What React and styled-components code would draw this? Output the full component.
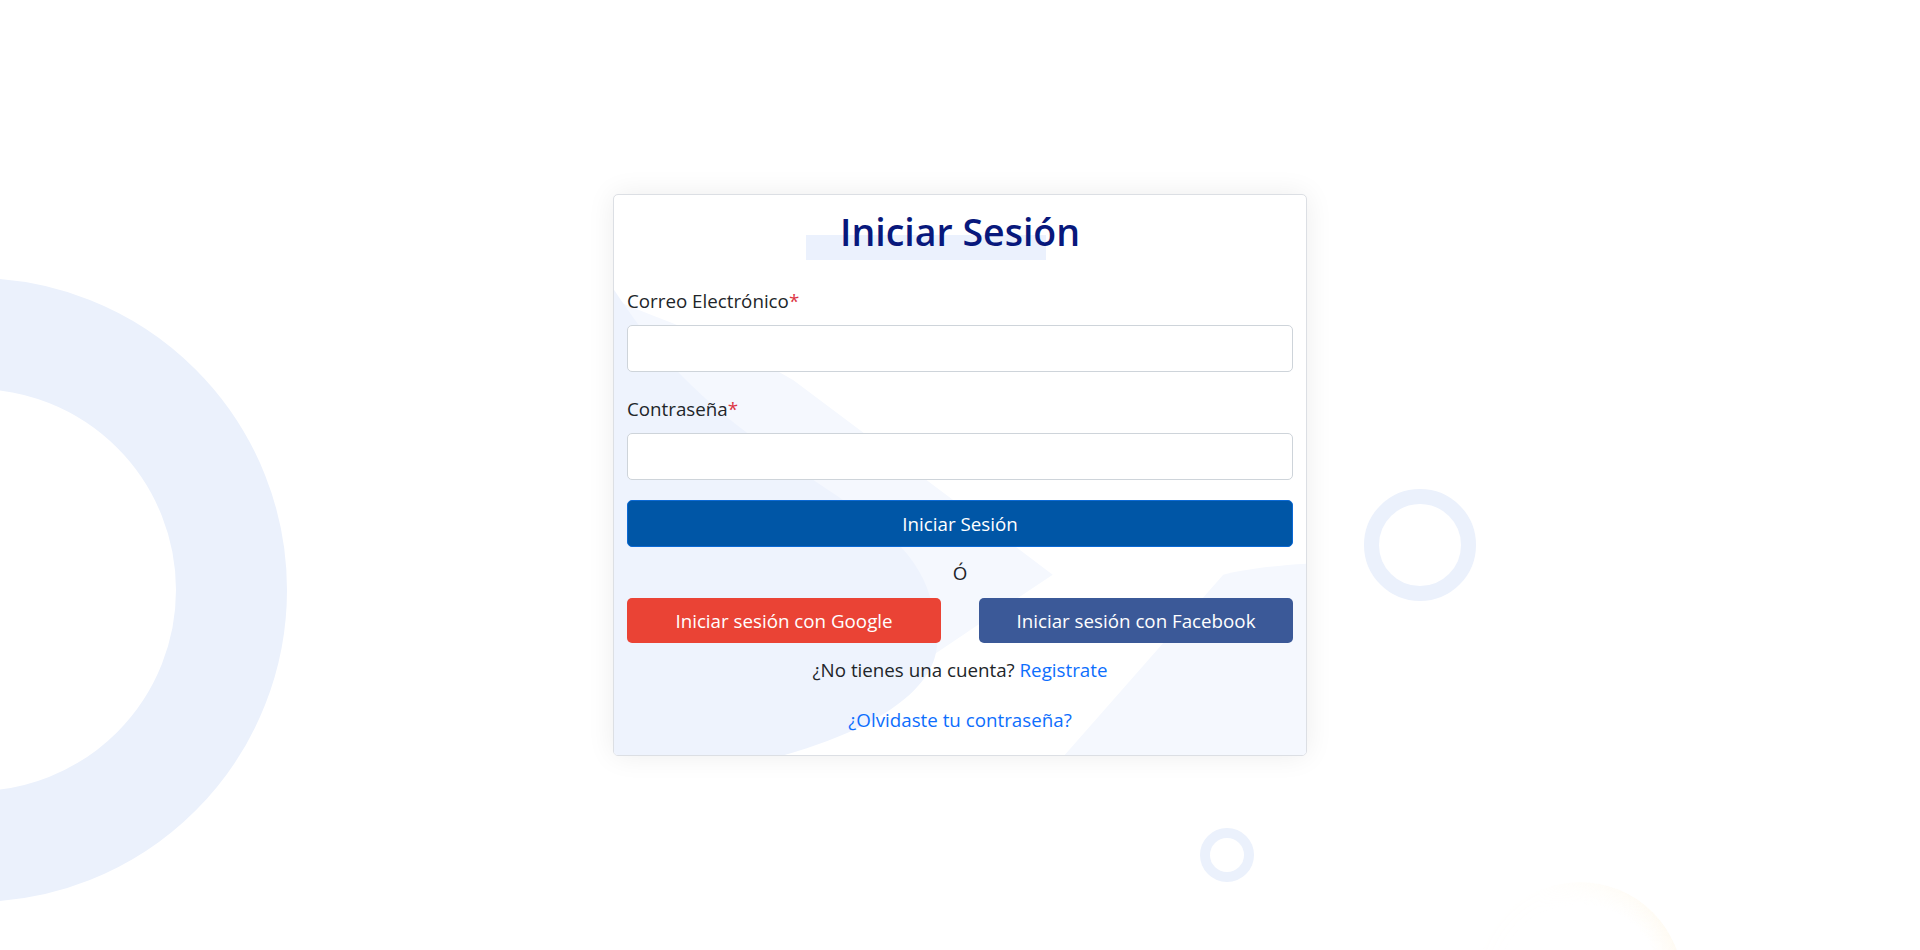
import React from "react";
import styled, { createGlobalStyle } from "styled-components";

const GlobalStyle = createGlobalStyle`
  html, body {
    margin: 0;
    padding: 0;
    background: #ffffff;
  }
  body {
    font-family: "Open Sans", "Noto Sans", sans-serif;
    font-size: 18.75px;
    color: #212529;
  }
  * { box-sizing: border-box; }
`;

const Page = styled.main`
  position: relative;
  min-height: 100vh;
  display: flex;
  align-items: center;
  justify-content: center;
  overflow: hidden;
  background: #ffffff;
`;

const Ring = styled.div`
  position: absolute;
  left: ${(p) => p.$x - p.$r}px;
  top: ${(p) => p.$y - p.$r}px;
  width: ${(p) => p.$r * 2}px;
  height: ${(p) => p.$r * 2}px;
  border-radius: 50%;
  border: ${(p) => p.$w}px solid #ebf1fc;
  pointer-events: none;
`;

const Glow = styled.div`
  position: absolute;
  left: 1477px;
  top: 882px;
  width: 206px;
  height: 206px;
  border-radius: 50%;
  background: radial-gradient(circle, rgba(255, 255, 255, 0) 55%, rgba(253, 236, 200, 0.6) 100%);
  -webkit-mask-image: linear-gradient(to right, rgba(0, 0, 0, 0.08) 30%, #000 90%);
  mask-image: linear-gradient(to right, rgba(0, 0, 0, 0.08) 30%, #000 90%);
  pointer-events: none;
`;

const Card = styled.section`
  position: relative;
  z-index: 1;
  width: 694px;
  background: #ffffff;
  border: 1px solid #dcdfe4;
  border-radius: 5px;
  box-shadow: 0 0 28px rgba(0, 0, 0, 0.075);
  overflow: hidden;
`;

const CardDecor = styled.svg`
  position: absolute;
  inset: 0;
  width: 100%;
  height: 100%;
  z-index: 0;
`;

const Body = styled.div`
  position: relative;
  z-index: 1;
  display: flex;
  flex-direction: column;
  padding: 13px 13px 20px;
`;

const Title = styled.h2`
  margin: 0;
  text-align: center;
  font-size: 37.5px;
  line-height: 48px;
  font-weight: 600;
  color: #08187c;
`;

const TitleText = styled.span`
  position: relative;
  display: inline-block;
  isolation: isolate;
  &::before {
    content: "";
    position: absolute;
    left: -34px;
    top: 27px;
    width: 240px;
    height: 25px;
    background: #ebf1fd;
    z-index: -1;
  }
`;

const Label = styled.label`
  display: block;
  margin: ${(p) => p.$top}px 0 9px;
  line-height: 30px;
`;

const Req = styled.span`
  color: #dc3545;
`;

const Input = styled.input`
  display: block;
  width: 100%;
  height: 47px;
  padding: 0 15px;
  font: inherit;
  color: #212529;
  background: #ffffff;
  border: 1px solid #ced4da;
  border-radius: 5px;
  outline: none;
`;

const PrimaryButton = styled.button`
  margin-top: 20px;
  height: 47px;
  width: 100%;
  display: flex;
  align-items: center;
  justify-content: center;
  font: inherit;
  line-height: 30px;
  color: #ffffff;
  background: #0056a6;
  border: 1px solid #0b69d4;
  border-radius: 5px;
  cursor: pointer;
`;

const Divider = styled.div`
  margin-top: 11px;
  text-align: center;
  line-height: 30px;
`;

const SocialRow = styled.div`
  margin-top: 10px;
  display: grid;
  grid-template-columns: 1fr 1fr;
  column-gap: 38px;
`;

const SocialButton = styled.button`
  height: 45px;
  display: flex;
  align-items: center;
  justify-content: center;
  font: inherit;
  line-height: 30px;
  color: #ffffff;
  background: ${(p) => (p.$brand === "google" ? "#ea4335" : "#3b5998")};
  border: none;
  border-radius: 5px;
  cursor: pointer;
`;

const Prompt = styled.p`
  margin: ${(p) => p.$top}px 0 0;
  text-align: center;
  line-height: 30px;
`;

const Link = styled.a`
  color: #0d6efd;
  text-decoration: none;
`;

export default function App() {
  return (
    <>
      <GlobalStyle />
      <Page>
        <Ring $x={-25} $y={590} $r={312} $w={111} />
        <Ring $x={1420} $y={545} $r={56} $w={15} />
        <Ring $x={1227} $y={855} $r={27} $w={10} />
        <Glow />
        <Card>
          <CardDecor viewBox="0 0 694 562" preserveAspectRatio="none" aria-hidden="true">
            <path d="M0,105 C60,130 120,150 180,186 L440,381 L171,562 L0,562 Z" fill="#f5f8fe" />
            <path d="M0,95 C30,140 64,186 134,239 L200,286 C280,340 320,366 324,446 C326,500 250,540 171,562 L0,562 Z" fill="#eef3fd" />
            <path d="M694,370 C660,372 630,376 611,381 L452,562 L694,562 Z" fill="#f5f8fe" />
          </CardDecor>
          <Body>
            <Title>
              <TitleText>Iniciar Sesión</TitleText>
            </Title>
            <Label $top={30} htmlFor="email">
              Correo Electrónico<Req>*</Req>
            </Label>
            <Input id="email" type="email" />
            <Label $top={22} htmlFor="password">
              Contraseña<Req>*</Req>
            </Label>
            <Input id="password" type="password" />
            <PrimaryButton type="button">Iniciar Sesión</PrimaryButton>
            <Divider>Ó</Divider>
            <SocialRow>
              <SocialButton type="button" $brand="google">
                Iniciar sesión con Google
              </SocialButton>
              <SocialButton type="button" $brand="facebook">
                Iniciar sesión con Facebook
              </SocialButton>
            </SocialRow>
            <Prompt $top={12}>
              ¿No tienes una cuenta? <Link href="#">Registrate</Link>
            </Prompt>
            <Prompt $top={20}>
              <Link href="#">¿Olvidaste tu contraseña?</Link>
            </Prompt>
          </Body>
        </Card>
      </Page>
    </>
  );
}
